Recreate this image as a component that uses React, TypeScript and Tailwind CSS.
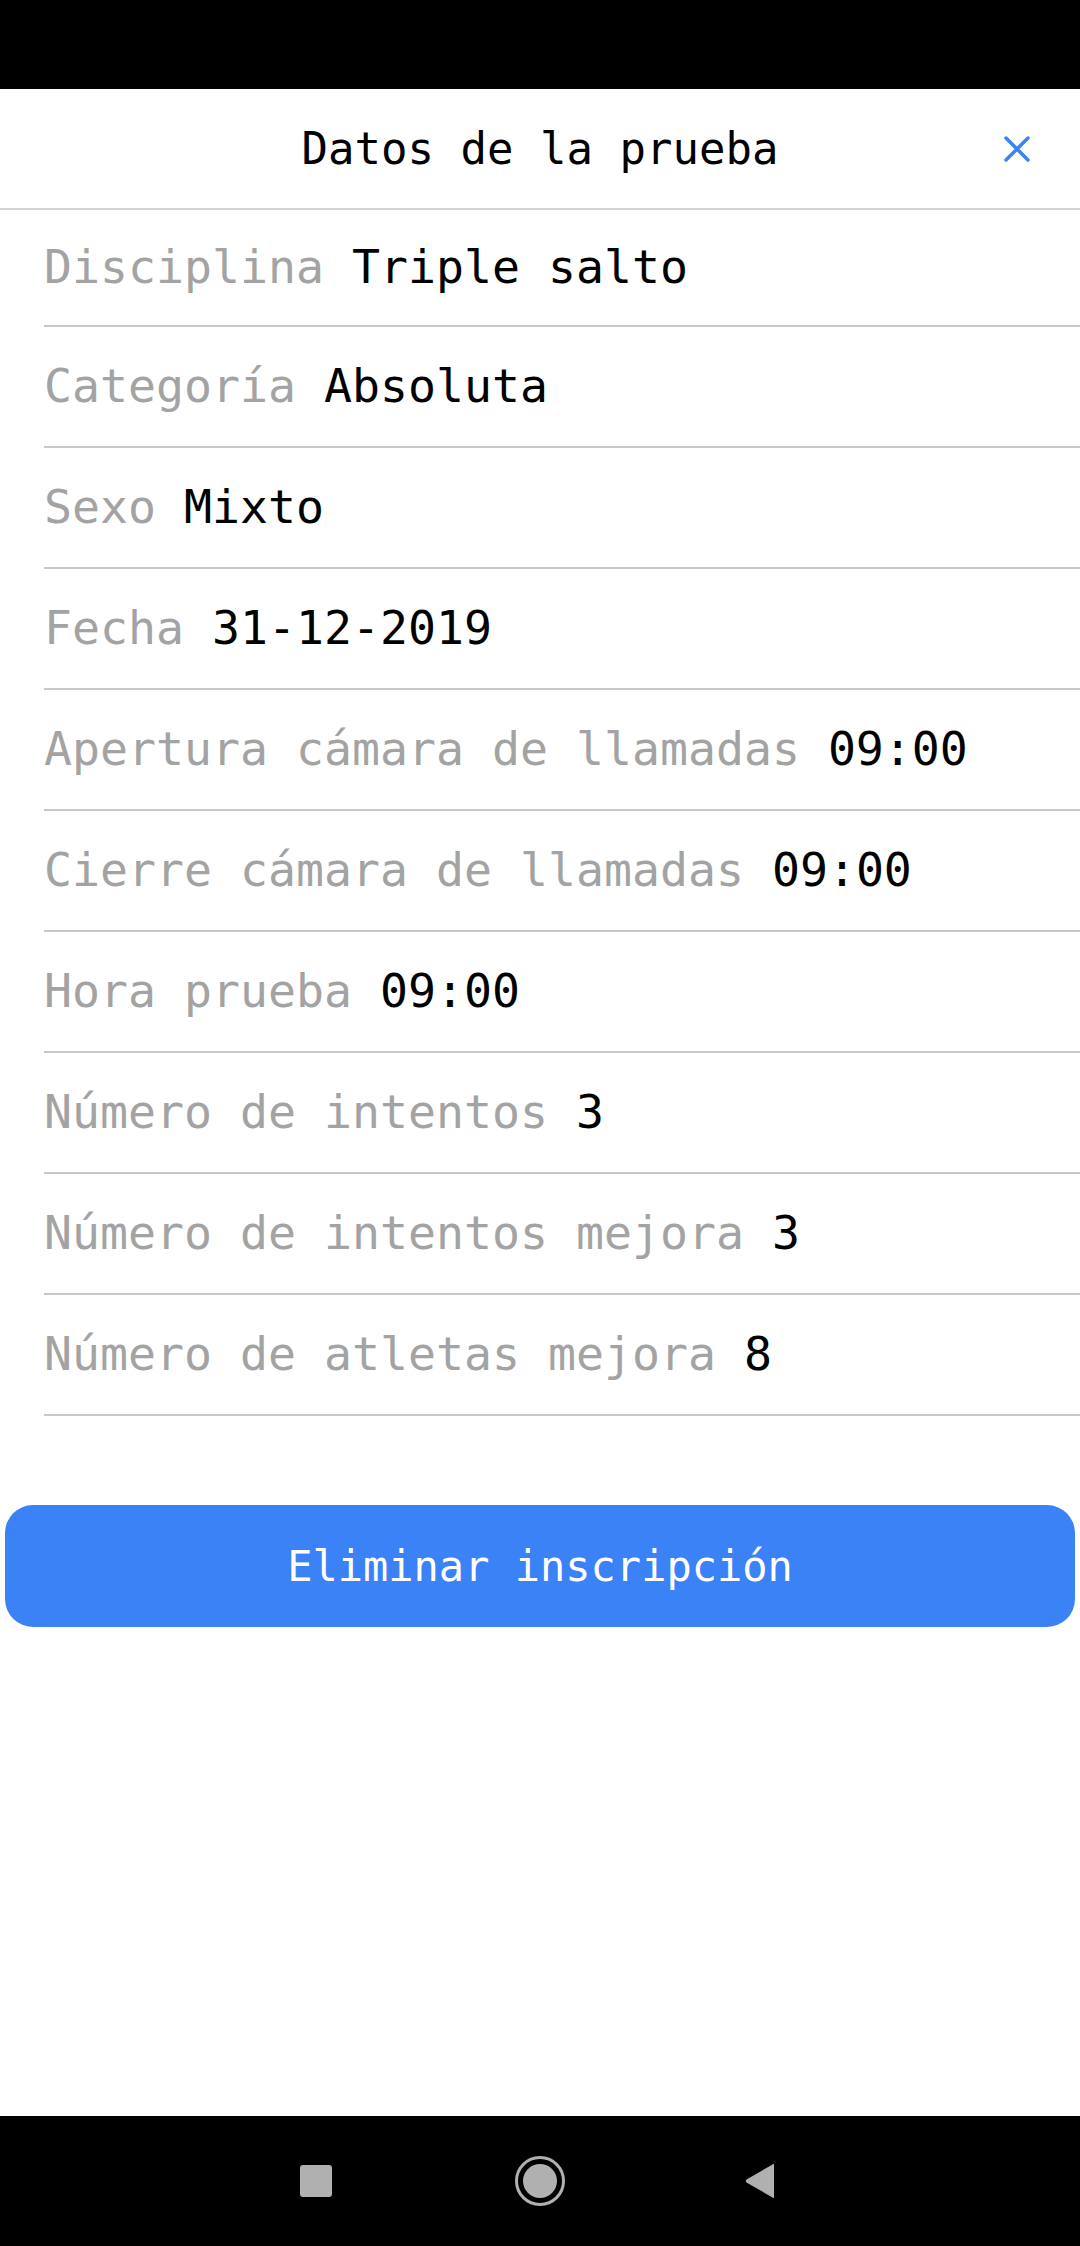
const rows: { label: string; value: string }[] = [
  { label: "Disciplina", value: "Triple salto" },
  { label: "Categoría", value: "Absoluta" },
  { label: "Sexo", value: "Mixto" },
  { label: "Fecha", value: "31-12-2019" },
  { label: "Apertura cámara de llamadas", value: "09:00" },
  { label: "Cierre cámara de llamadas", value: "09:00" },
  { label: "Hora prueba", value: "09:00" },
  { label: "Número de intentos", value: "3" },
  { label: "Número de intentos mejora", value: "3" },
  { label: "Número de atletas mejora", value: "8" },
];

const App = () => {
  return (
    <div className="flex h-[2246px] w-[1080px] flex-col bg-white font-['DejaVu_Sans_Mono',monospace]">
      {/* Status bar */}
      <div className="h-[89px] bg-black" />

      {/* Header */}
      <div className="relative flex h-[121px] items-center justify-center border-b-2 border-[#d4d4d4]">
        <h1 className="text-[44px] text-black">Datos de la prueba</h1>
        <button className="absolute right-[43px] top-1/2 flex h-[40px] w-[40px] -translate-y-1/2 items-center justify-center">
          <svg width="26" height="26" viewBox="0 0 26 26" fill="none">
            <path
              d="M2 2L24 24M24 2L2 24"
              stroke="#3b82f6"
              strokeWidth={3.5}
              strokeLinecap="round"
            />
          </svg>
        </button>
      </div>

      {/* Details */}
      <div className="flex-1">
        <div className="pl-[44px]">
          {rows.map((row, index) => (
            <div
              key={row.label}
              className={`flex items-center border-b-2 border-[#c8c8c8] text-[46.5px] leading-none ${
                index === 0 ? "h-[117px]" : "h-[121px]"
              }`}
            >
              <span className="text-[#a3a3a3]">{row.label}</span>
              <span className="ml-[28px] text-black">{row.value}</span>
            </div>
          ))}
        </div>

        <div className="mx-[5px] mt-[89px]">
          <button className="flex h-[122px] w-full items-center justify-center rounded-[28px] bg-[#3b82f6] text-[42px] text-white">
            Eliminar inscripción
          </button>
        </div>
      </div>

      {/* Navigation bar */}
      <div className="flex h-[130px] items-center bg-black pl-[266px]">
        <div className="flex w-[100px] justify-center">
          <div className="h-[32px] w-[32px] rounded-[3px] bg-[#b0b0b0]" />
        </div>
        <div className="ml-[124px] flex w-[100px] justify-center">
          <div className="flex h-[50px] w-[50px] items-center justify-center rounded-full border-[3px] border-[#b0b0b0]">
            <div className="h-[34px] w-[34px] rounded-full bg-[#b0b0b0]" />
          </div>
        </div>
        <div className="ml-[120px] flex w-[100px] justify-center">
          <svg width="34" height="38" viewBox="0 0 34 38">
            <path
              d="M31 3 L31 35 Q31 37 29.5 35.5 L3.5 20.5 Q2 19 3.5 17.5 L29.5 2.5 Q31 1 31 3 Z"
              fill="#b0b0b0"
            />
          </svg>
        </div>
      </div>
    </div>
  );
};

export default App;
